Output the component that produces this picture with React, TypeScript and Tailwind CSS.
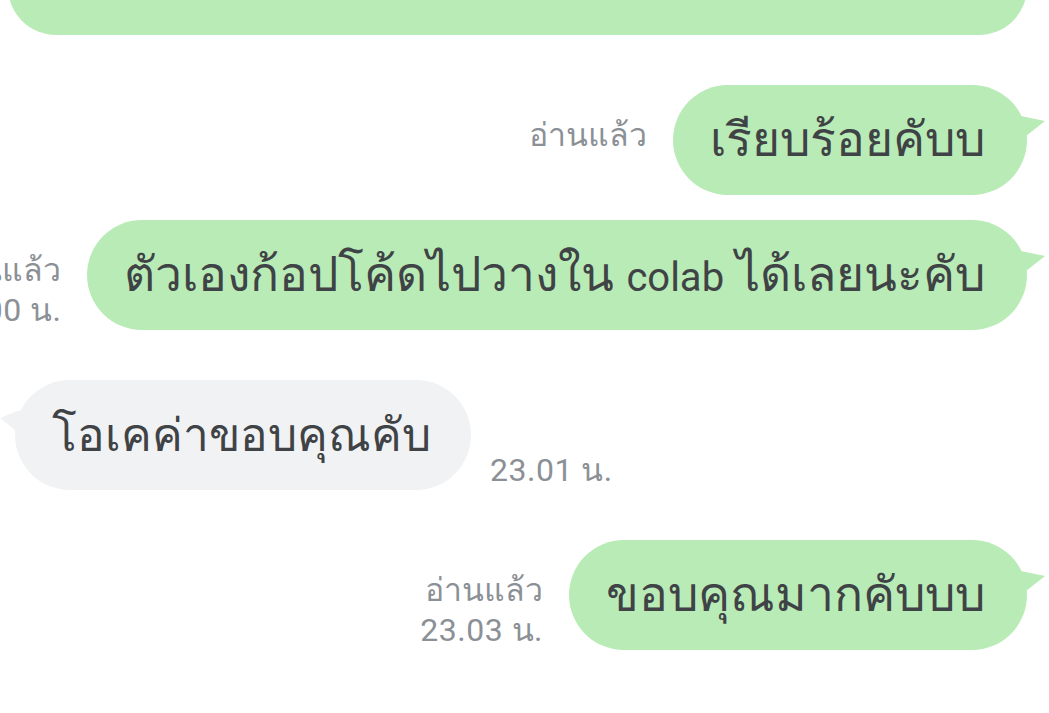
import React from "react";

type Msg =
  | { id: number; side: "me"; text: React.ReactNode; read: boolean; time?: string; labelLift?: boolean }
  | { id: number; side: "them"; text: React.ReactNode; time: string };

const messages: Msg[] = [
  { id: 1, side: "me", text: "เรียบร้อยคับบ", read: true, labelLift: true },
  {
    id: 2,
    side: "me",
    text: (
      <>
        ตัวเองก้อปโค้ดไปวางใน <span className="text-[40px]">colab</span> ได้เลยนะคับ
      </>
    ),
    read: true,
    time: "23.00 น.",
  },
  { id: 3, side: "them", text: "โอเคค่าขอบคุณคับ", time: "23.01 น." },
  { id: 4, side: "me", text: "ขอบคุณมากคับบบ", read: true, time: "23.03 น." },
];

function TailRight() {
  return (
    <svg
      className="absolute right-[-20px] top-[29px]"
      width="26"
      height="28"
      viewBox="0 0 26 28"
    >
      <path d="M0 2 L24 7 L0 26 Z" fill="#b9ebb7" />
    </svg>
  );
}

function TailLeft() {
  return (
    <svg
      className="absolute left-[-15px] top-[28px]"
      width="20"
      height="28"
      viewBox="0 0 20 28"
    >
      <path d="M20 2 L0 10 L20 26 Z" fill="#f1f2f4" />
    </svg>
  );
}

function MetaLabel({ read, time }: { read?: boolean; time?: string }) {
  return (
    <div className="flex shrink-0 flex-col items-end text-[32px] leading-[40px] text-[#8b9096] whitespace-nowrap">
      {read && <span>อ่านแล้ว</span>}
      {time && <span className="tracking-[0.5px]">{time}</span>}
    </div>
  );
}

function Row({ msg }: { msg: Msg }) {
  if (msg.side === "them") {
    return (
      <div className="flex items-end gap-[19px] pl-[15px]">
        <div className="relative flex h-[110px] shrink-0 items-center rounded-[55px] bg-[#f1f2f4] pl-[37px] pr-[40px]">
          <TailLeft />
          <span className="whitespace-nowrap text-[46px] text-[#3f4346]">{msg.text}</span>
        </div>
        <MetaLabel time={msg.time} />
      </div>
    );
  }
  return (
    <div className="flex items-end justify-end gap-[26px] pr-[22px]">
      <div className={msg.labelLift ? "mb-[40px]" : ""}>
        <MetaLabel read={msg.read} time={msg.time} />
      </div>
      <div className="relative flex h-[110px] shrink-0 items-center rounded-[55px] bg-[#b9ebb7] pl-[37px] pr-[42px]">
        <TailRight />
        <span className="whitespace-nowrap text-[48px] text-[#3f4346]">{msg.text}</span>
      </div>
    </div>
  );
}

export default function App() {
  return (
    <div
      className="h-[713px] w-[1049px] overflow-hidden bg-white"
      style={{ fontFamily: "Roboto, 'Noto Sans', sans-serif" }}
    >
      {/* tail end of the previous long message with a link */}
      <div className="pl-[8px] pr-[22px]">
        <div className="relative -mt-[45px] h-[80px] rounded-b-[48px] bg-[#b9ebb7]">
          <div className="absolute left-[45px] top-[43px] h-[2px] w-[623px] bg-[#5b7fd6]" />
        </div>
      </div>

      <div className="mt-[50px] flex flex-col">
        <Row msg={messages[0]} />
        <div className="mt-[25px]">
          <Row msg={messages[1]} />
        </div>
        <div className="mt-[50px]">
          <Row msg={messages[2]} />
        </div>
        <div className="mt-[50px]">
          <Row msg={messages[3]} />
        </div>
      </div>
    </div>
  );
}
